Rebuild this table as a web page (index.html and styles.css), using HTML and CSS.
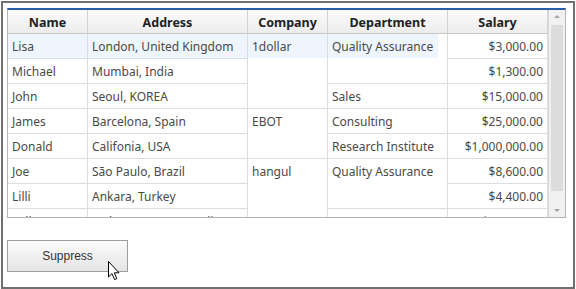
FILE: index.html
```html
<!DOCTYPE html>
<html lang="en">
<head>
    <meta charset="UTF-8">
    <title>Grid - Suppress</title>
    <link rel="stylesheet" href="styles.css">
</head>
<body>
    <div class="frame">
        <div class="grid">
            <div class="grid-view">
                <div class="cells">
                    <div class="hd">Name</div>
                    <div class="hd">Address</div>
                    <div class="hd">Company</div>
                    <div class="hd">Department</div>
                    <div class="hd">Salary</div>

                    <!-- row 1 (selected) -->
                    <div class="cell sel">Lisa</div>
                    <div class="cell sel">London, United Kingdom</div>
                    <div class="cell sel-top span3">1dollar</div>
                    <div class="cell sel-top span2 dept">Quality Assurance</div>
                    <div class="cell num">$3,000.00</div>

                    <div class="cell">Michael</div>
                    <div class="cell">Mumbai, India</div>
                    <div class="cell num">$1,300.00</div>

                    <div class="cell">John</div>
                    <div class="cell">Seoul, KOREA</div>
                    <div class="cell dept">Sales</div>
                    <div class="cell num">$15,000.00</div>

                    <div class="cell">James</div>
                    <div class="cell">Barcelona, Spain</div>
                    <div class="cell span2 comp">EBOT</div>
                    <div class="cell dept">Consulting</div>
                    <div class="cell num">$25,000.00</div>

                    <div class="cell">Donald</div>
                    <div class="cell">Califonia, USA</div>
                    <div class="cell dept">Research Institute</div>
                    <div class="cell num">$1,000,000.00</div>

                    <div class="cell">Joe</div>
                    <div class="cell">São Paulo, Brazil</div>
                    <div class="cell span3 comp">hangul</div>
                    <div class="cell span2 dept">Quality Assurance</div>
                    <div class="cell num">$8,600.00</div>

                    <div class="cell">Lilli</div>
                    <div class="cell">Ankara, Turkey</div>
                    <div class="cell num">$4,400.00</div>

                    <div class="cell">Sally</div>
                    <div class="cell">Sydney, NSW, Australia</div>
                    <div class="cell dept">R&amp;D</div>
                    <div class="cell num">$22,000.00</div>
                </div>
            </div>
            <div class="vscroll">
                <div class="arrow up"></div>
                <div class="thumb"></div>
                <div class="arrow down"></div>
            </div>
        </div>

        <div class="actions">
            <button class="btn">Suppress</button>
            <svg class="cursor" width="13" height="20" viewBox="0 0 13 20">
                <path d="M0.5 0.5 L0.5 16 L4 12.6 L6.6 18.6 L8.8 17.6 L6.3 11.8 L11 11.8 Z" fill="#fff" stroke="#000" stroke-width="1" stroke-linejoin="miter"/>
            </svg>
        </div>
    </div>
</body>
</html>
```

FILE: styles.css
```css
body {
    margin: 0;
    font-family: "Noto Sans", "Liberation Sans", sans-serif;
    background: #fff;
}
.frame {
    box-sizing: border-box;
    width: 574px;
    height: 288px;
    margin: 1px 0 0 1px;
    border: 2px solid #707070;
    padding: 5px 0 0 4px;
}

/* grid */
.grid {
    display: flex;
    width: 559px;
    height: 210px;
    box-sizing: border-box;
    border: 1px solid #b5b5b5;
    border-top: 2px solid #2a5ca8;
}
.grid-view {
    width: 540px;
    height: 207px;
    overflow: hidden;
}
.cells {
    display: grid;
    grid-template-columns: 80px 160px 80px 120px 100px;
    grid-template-rows: 24px;
    grid-auto-rows: 25px;
}
.hd {
    box-sizing: border-box;
    border-right: 1px solid #d2d2d2;
    border-bottom: 1px solid #c9c9c9;
    background: linear-gradient(#fbfbfb, #ececec);
    font-size: 12.5px;
    font-weight: bold;
    color: #222;
    text-align: center;
    padding-top: 2px;
    line-height: 21px;
}
.cell {
    box-sizing: border-box;
    border-right: 1px solid #dadde2;
    border-bottom: 1px solid #dadde2;
    padding: 2px 4px 0;
    font-size: 12px;
    color: #4a4a4a;
    line-height: 22px;
    white-space: nowrap;
    overflow: hidden;
}
.num { text-align: right; grid-column: 5; }
.dept { grid-column: 4; }
.comp { grid-column: 3; }
.span2 { grid-row: span 2; }
.span3 { grid-row: span 3; }
.sel { background: #eef5fc; }
.sel-top { background: linear-gradient(#eef5fc 24px, #fff 24px); }
.dept.sel-top { background: linear-gradient(to right, #eef5fc 110px, #fff 110px) 0 0 / 100% 24px no-repeat; }

/* scrollbar */
.vscroll {
    width: 17px;
    height: 207px;
    background: #f1f1f1;
    border-left: 1px solid #dadada;
    box-sizing: border-box;
    display: flex;
    flex-direction: column;
    align-items: center;
}
.arrow {
    width: 0;
    height: 0;
    border-left: 3px solid transparent;
    border-right: 3px solid transparent;
}
.arrow.up {
    margin-top: 5px;
    border-bottom: 3px solid #a3a3a3;
}
.arrow.down {
    margin-top: auto;
    margin-bottom: 5px;
    border-top: 3px solid #a3a3a3;
}
.thumb {
    width: 12px;
    height: 166px;
    margin-top: 7px;
    background: #dcdcdc;
}

/* buttons */
.actions {
    position: relative;
    margin-top: 22px;
}
.btn {
    width: 121px;
    height: 32px;
    border: 1px solid #9e9e9e;
    background: linear-gradient(#fbfbfb, #e5e5e5);
    font-family: "Liberation Sans", Arial, sans-serif;
    font-size: 12px;
    color: #333;
    padding: 0;
    margin: 0;
}
.cursor {
    position: absolute;
    left: 101px;
    top: 21px;
}
```
